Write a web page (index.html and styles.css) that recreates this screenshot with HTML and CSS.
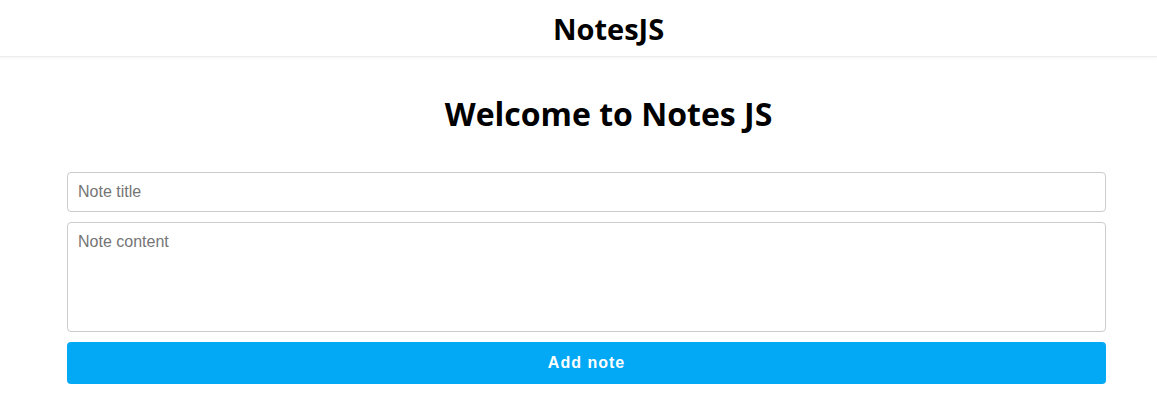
FILE: index.html
```html
<!DOCTYPE html>
<html>
<head>
<meta charset="utf-8">
<title>NotesJS</title>
<link rel="stylesheet" href="styles.css">
</head>
<body>
<header class="topbar">
  <div class="brand">NotesJS</div>
</header>
<main class="main">
  <h1 class="welcome">Welcome to Notes JS</h1>
  <form class="note-form">
    <input class="field" type="text" placeholder="Note title">
    <textarea class="field area" placeholder="Note content"></textarea>
    <button class="add-btn" type="button">Add note</button>
  </form>
</main>
</body>
</html>
```
FILE: styles.css
```css
* { box-sizing: border-box; }
html, body { margin: 0; padding: 0; background: #fff; }
body { font-family: "Open Sans", sans-serif; color: #000; }
.topbar {
  height: 57px;
  display: flex;
  align-items: center;
  justify-content: center;
  padding-left: 60px;
  border-bottom: 1px solid #ececec;
  box-shadow: 0 1px 3px rgba(0,0,0,0.05);
}
.brand { font-weight: 700; font-size: 29px; line-height: 1; }
.main { padding: 0 51px 0 67px; }
.welcome {
  margin: 37px 0 38px;
  text-align: center;
  padding-left: 44px;
  font-size: 32px;
  font-weight: 700;
  line-height: 40px;
}
.note-form { display: flex; flex-direction: column; gap: 10px; }
.field {
  width: 100%;
  height: 40px;
  border: 1px solid #ccc;
  border-radius: 4px;
  padding: 0 10px;
  font-family: "Liberation Sans", Arial, sans-serif;
  font-size: 16px;
  color: #333;
  outline: none;
}
.field::placeholder { color: #757575; }
.area { height: 110px; padding: 10px; resize: none; display: block; }
.add-btn {
  height: 42px;
  border: none;
  border-radius: 4px;
  background: #03a9f4;
  color: #fff;
  font-family: "Liberation Sans", Arial, sans-serif;
  font-weight: 700;
  font-size: 16px;
  letter-spacing: 1px;
}
```
